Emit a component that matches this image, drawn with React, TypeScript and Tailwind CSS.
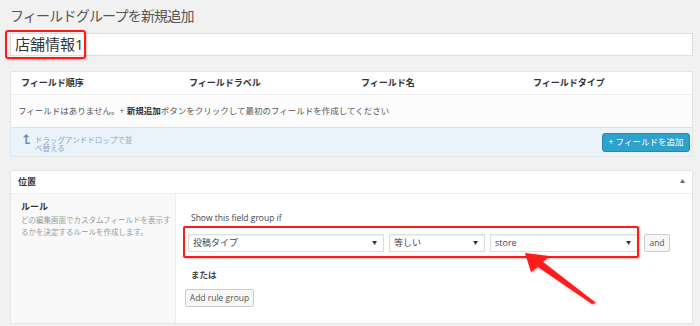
import React from "react";

const font = { fontFamily: '"Open Sans", "Noto Sans CJK JP", sans-serif' };

function SelectBox({ label, className }: { label: string; className: string }) {
  return (
    <div
      className={`flex h-[18px] items-center justify-between border border-[#ddd] bg-white pl-[4px] pr-[6px] text-[9px] text-[#444] shadow-[inset_0_1px_2px_rgba(0,0,0,0.07)] ${className}`}
    >
      <span>{label}</span>
      <span className="text-[5px] text-[#333]">▼</span>
    </div>
  );
}

export default function App() {
  return (
    <div className="relative min-h-[326px] w-[700px] overflow-hidden bg-[#f1f1f1] px-[10px] pt-[5px]" style={font}>
      {/* タイトル */}
      <h1 className="h-[24px] text-[14px] leading-[22px] tracking-[-0.8px] text-[#555]">フィールドグループを新規追加</h1>
      <div className="mt-[4px] flex h-[23px] w-[683px] items-center border border-[#ddd] bg-white pl-[4px] text-[15px] text-[#333]">
        店舗情報1
      </div>

      {/* フィールド一覧 */}
      <div className="mt-[15px] w-[683px] border border-[#e5e5e5] bg-white">
        <div className="grid h-[23px] grid-cols-[168px_172px_172px_1fr] items-center border-b border-[#eee] pl-[10px] text-[9px] font-bold text-[#333]">
          <span>フィールド順序</span>
          <span>フィールドラベル</span>
          <span>フィールド名</span>
          <span>フィールドタイプ</span>
        </div>
        <div className="flex h-[33px] items-center border-b border-[#e1e1e1] bg-[#fcfcfc] pl-[7px] text-[8.5px] text-[#555]">
          フィールドはありません。+&nbsp;<b className="text-[#333]">新規追加</b>ボタンをクリックして最初のフィールドを作成してください
        </div>
        <div className="flex h-[28px] items-center justify-between bg-[#eaf2fa] pl-[12px] pr-[2px]">
          <div className="flex items-start gap-[4px] text-[#8fa8c4]">
            <span className="text-[13px] font-bold leading-[13px] text-[#6f8fb5]">⮤</span>
            <span className="mt-[3px] w-[98px] text-[7.5px] leading-[8px]">ドラッグアンドドロップで並べ替える</span>
          </div>
          <button className="h-[19px] w-[88px] rounded-[3px] border border-[#2288b5] bg-[#2ea2cc] text-[8.5px] leading-[16px] text-white">
            + フィールドを追加
          </button>
        </div>
      </div>

      {/* 位置 */}
      <div className="mt-[13px] w-[683px] border border-[#e5e5e5] bg-white">
        <div className="flex h-[23px] items-center justify-between border-b border-[#eee] pl-[7px] pr-[7px] text-[9px] font-bold text-[#333]">
          <span>位置</span>
          <span className="text-[5px] text-[#666]">▲</span>
        </div>
        <div className="grid h-[129px] grid-cols-[165px_1fr]">
          <div className="border-r border-[#eee] bg-[#f9f9f9] pl-[10px] pt-[6px]">
            <div className="text-[9px] font-bold leading-[14px] text-[#333]">ルール</div>
            <div className="w-[150px] text-[7.5px] leading-[12px] text-[#999]">
              どの編集画面でカスタムフィールドを表示するかを決定するルールを作成します。
            </div>
          </div>
          <div className="pl-[12px] pt-[18px]">
            <div className="pl-[3px] text-[8.5px] text-[#444]">Show this field group if</div>
            <div className="mt-[9px] flex items-center">
              <SelectBox label="投稿タイプ" className="w-[196px]" />
              <SelectBox label="等しい" className="ml-[5px] w-[96px]" />
              <SelectBox label="store" className="ml-[5px] w-[148px]" />
              <button className="ml-[6px] h-[18px] w-[26px] rounded-[2px] border border-[#ccc] bg-[#f7f7f7] text-[8.5px] leading-[14px] text-[#555]">
                and
              </button>
            </div>
            <div className="mt-[17px] pl-[3px] text-[8.5px] font-bold text-[#444]">または</div>
            <button className="ml-[-3px] mt-[7px] h-[18px] w-[69px] rounded-[2px] border border-[#ccc] bg-[#f7f7f7] text-[8.5px] leading-[14px] text-[#555]">
              Add rule group
            </button>
          </div>
        </div>
      </div>

      {/* 注釈 */}
      <div className="absolute left-[5px] top-[30px] h-[29px] w-[81px] rounded-[3px] border-2 border-[#ff1a1a] shadow-[1px_1px_2px_rgba(0,0,0,0.25)]" />
      <div className="absolute left-[183px] top-[226px] h-[32px] w-[456px] rounded-[2px] border-2 border-[#ff1a1a] shadow-[1px_1px_2px_rgba(0,0,0,0.25)]" />
      <svg className="absolute left-0 top-0" width="700" height="326" viewBox="0 0 700 326">
        <defs>
          <filter id="sh" x="-20%" y="-20%" width="140%" height="140%">
            <feDropShadow dx="1" dy="1" stdDeviation="1" floodOpacity="0.3" />
          </filter>
        </defs>
        <polygon
          points="525,253 549,256 543,262 596,303 592,304 538,267 531,272"
          fill="#ff1a1a"
          filter="url(#sh)"
        />
      </svg>
    </div>
  );
}
